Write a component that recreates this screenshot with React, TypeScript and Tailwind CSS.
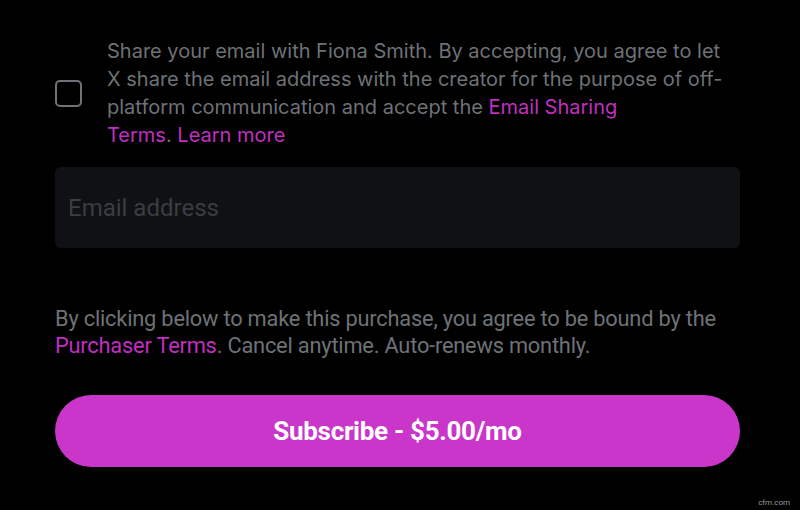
export default function App() {
  return (
    <div className="relative h-[510px] w-[800px] overflow-hidden bg-black font-['Inter',sans-serif]">
      <div className="flex flex-col pl-[55px] pr-[60px] pt-[37px]">
        <div className="flex items-center gap-[25px]">
          <div className="h-[27px] w-[27px] shrink-0 rounded-[5px] border-2 border-[#6f7377]" />
          <p className="whitespace-nowrap text-[20px] leading-[28px] text-[#6e7276]">
            Share your email with Fiona Smith. By accepting, you agree to let
            <br />
            X share the email address with the creator for the purpose of off-
            <br />
            platform communication and accept the{" "}
            <span className="text-[#c02fc0]">
              Email Sharing
              <br />
              Terms
            </span>
            .{" "}
            <span className="text-[#c02fc0]">Learn more</span>
          </p>
        </div>
        <div className="mt-[18px] flex h-[81px] items-center rounded-[6px] bg-[#101114] px-[13px]">
          <span className="font-['Roboto',sans-serif] text-[24px] text-[#3a3d41]">Email address</span>
        </div>
        <p className="mt-[57px] font-['Roboto',sans-serif] text-[21.8px] leading-[27px] tracking-[-0.2px] text-[#6e7276]">
          By clicking below to make this purchase, you agree to be bound by the{" "}
          <span className="text-[#c02fc0]">Purchaser Terms</span>. Cancel anytime. Auto-renews monthly.
        </p>
        <button className="mt-[36px] flex h-[72px] w-full items-center justify-center rounded-full bg-[#c936c9] font-['Roboto',sans-serif] text-[26px] font-bold tracking-[-0.3px] text-white">
          Subscribe - $5.00/mo
        </button>
      </div>
      <span className="absolute bottom-[1px] right-[10px] font-['Roboto',sans-serif] text-[8px] text-[#9a9a9a]">
        cfm.com
      </span>
    </div>
  );
}
